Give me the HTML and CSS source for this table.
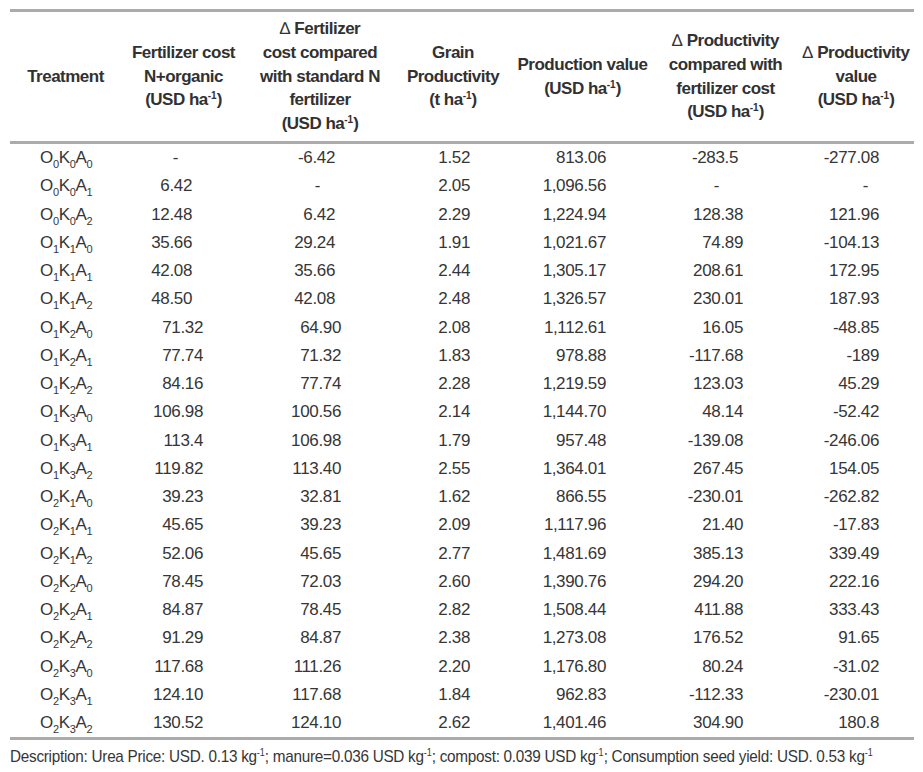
FILE: index.html
```html
<!DOCTYPE html>
<html lang="en">
<head>
<meta charset="utf-8">
<title>Fertilizer cost table</title>
<link rel="stylesheet" href="styles.css">
</head>
<body>
<div class="sheet">
  <div class="tbl">
    <div class="rule"></div>
    <div class="row head">
      <div class="h"><span>Treatment</span></div>
      <div class="h"><span>Fertilizer cost<br>N+organic<br>(USD ha<sup>-1</sup>)</span></div>
      <div class="h"><span><span class="delta">∆</span> Fertilizer<br>cost compared<br>with standard N<br>fertilizer<br>(USD ha<sup>-1</sup>)</span></div>
      <div class="h"><span>Grain<br>Productivity<br>(t ha<sup>-1</sup>)</span></div>
      <div class="h"><span>Production value<br>(USD ha<sup>-1</sup>)</span></div>
      <div class="h"><span><span class="delta">∆</span> Productivity<br>compared with<br>fertilizer cost<br>(USD ha<sup>-1</sup>)</span></div>
      <div class="h"><span><span class="delta">∆</span> Productivity<br>value<br>(USD ha<sup>-1</sup>)</span></div>
    </div>
    <div class="rule"></div>

    <div class="row early first"><div>O<sub>0</sub>K<sub>0</sub>A<sub>0</sub></div><div class="dash">-</div><div>-6.42</div><div>1.52</div><div>813.06</div><div class="short">-283.5</div><div>-277.08</div></div>
    <div class="row early second"><div>O<sub>0</sub>K<sub>0</sub>A<sub>1</sub></div><div>6.42</div><div class="dash">-</div><div>2.05</div><div>1,096.56</div><div class="dash">-</div><div class="dash">-</div></div>
    <div class="row early"><div>O<sub>0</sub>K<sub>0</sub>A<sub>2</sub></div><div>12.48</div><div>6.42</div><div>2.29</div><div>1,224.94</div><div>128.38</div><div>121.96</div></div>
    <div class="row early"><div>O<sub>1</sub>K<sub>1</sub>A<sub>0</sub></div><div>35.66</div><div>29.24</div><div>1.91</div><div>1,021.67</div><div>74.89</div><div>-104.13</div></div>
    <div class="row early"><div>O<sub>1</sub>K<sub>1</sub>A<sub>1</sub></div><div>42.08</div><div>35.66</div><div>2.44</div><div>1,305.17</div><div>208.61</div><div>172.95</div></div>
    <div class="row early"><div>O<sub>1</sub>K<sub>1</sub>A<sub>2</sub></div><div>48.50</div><div>42.08</div><div>2.48</div><div>1,326.57</div><div>230.01</div><div>187.93</div></div>
    <div class="row"><div>O<sub>1</sub>K<sub>2</sub>A<sub>0</sub></div><div>71.32</div><div>64.90</div><div>2.08</div><div>1,112.61</div><div>16.05</div><div>-48.85</div></div>
    <div class="row"><div>O<sub>1</sub>K<sub>2</sub>A<sub>1</sub></div><div>77.74</div><div>71.32</div><div>1.83</div><div>978.88</div><div>-117.68</div><div>-189</div></div>
    <div class="row"><div>O<sub>1</sub>K<sub>2</sub>A<sub>2</sub></div><div>84.16</div><div>77.74</div><div>2.28</div><div>1,219.59</div><div>123.03</div><div>45.29</div></div>
    <div class="row"><div>O<sub>1</sub>K<sub>3</sub>A<sub>0</sub></div><div>106.98</div><div>100.56</div><div>2.14</div><div>1,144.70</div><div>48.14</div><div>-52.42</div></div>
    <div class="row"><div>O<sub>1</sub>K<sub>3</sub>A<sub>1</sub></div><div>113.4</div><div>106.98</div><div>1.79</div><div>957.48</div><div>-139.08</div><div>-246.06</div></div>
    <div class="row"><div>O<sub>1</sub>K<sub>3</sub>A<sub>2</sub></div><div>119.82</div><div>113.40</div><div>2.55</div><div>1,364.01</div><div>267.45</div><div>154.05</div></div>
    <div class="row"><div>O<sub>2</sub>K<sub>1</sub>A<sub>0</sub></div><div>39.23</div><div>32.81</div><div>1.62</div><div>866.55</div><div>-230.01</div><div>-262.82</div></div>
    <div class="row"><div>O<sub>2</sub>K<sub>1</sub>A<sub>1</sub></div><div>45.65</div><div>39.23</div><div>2.09</div><div>1,117.96</div><div>21.40</div><div>-17.83</div></div>
    <div class="row"><div>O<sub>2</sub>K<sub>1</sub>A<sub>2</sub></div><div>52.06</div><div>45.65</div><div>2.77</div><div>1,481.69</div><div>385.13</div><div>339.49</div></div>
    <div class="row"><div>O<sub>2</sub>K<sub>2</sub>A<sub>0</sub></div><div>78.45</div><div>72.03</div><div>2.60</div><div>1,390.76</div><div>294.20</div><div>222.16</div></div>
    <div class="row"><div>O<sub>2</sub>K<sub>2</sub>A<sub>1</sub></div><div>84.87</div><div>78.45</div><div>2.82</div><div>1,508.44</div><div>411.88</div><div>333.43</div></div>
    <div class="row"><div>O<sub>2</sub>K<sub>2</sub>A<sub>2</sub></div><div>91.29</div><div>84.87</div><div>2.38</div><div>1,273.08</div><div>176.52</div><div>91.65</div></div>
    <div class="row"><div>O<sub>2</sub>K<sub>3</sub>A<sub>0</sub></div><div>117.68</div><div>111.26</div><div>2.20</div><div>1,176.80</div><div>80.24</div><div>-31.02</div></div>
    <div class="row"><div>O<sub>2</sub>K<sub>3</sub>A<sub>1</sub></div><div>124.10</div><div>117.68</div><div>1.84</div><div>962.83</div><div>-112.33</div><div>-230.01</div></div>
    <div class="row"><div>O<sub>2</sub>K<sub>3</sub>A<sub>2</sub></div><div>130.52</div><div>124.10</div><div>2.62</div><div>1,401.46</div><div>304.90</div><div>180.8</div></div>
    <div class="rule"></div>
  </div>
  <p class="note">Description: Urea Price: USD. 0.13 kg<sup>-1</sup>; manure=0.036 USD kg<sup>-1</sup>; compost: 0.039 USD kg<sup>-1</sup>; Consumption seed yield: USD. 0.53 kg<sup>-1</sup></p>
</div>
</body>
</html>
```

FILE: styles.css
```css
html, body {
  margin: 0;
  padding: 0;
  background: #ffffff;
}

.sheet {
  padding: 9px 0 0 10px;
  font-family: "Liberation Sans", Arial, sans-serif;
  color: #363636;
}

.tbl {
  display: grid;
  width: 904px;
  grid-template-columns: 111px 125px 148px 118px 141px 145px 116px;
  grid-template-rows: 3px 129px 3px repeat(21, 28.25px) 3px;
}

.rule {
  grid-column: 1 / -1;
  background: #ababab;
}

.row {
  display: contents;
}

.row > div {
  display: block;
  text-align: right;
  font-size: 17px;
  letter-spacing: -0.35px;
  line-height: 28.25px;
  white-space: nowrap;
}

/* header */
.head > .h {
  display: flex;
  align-items: center;
  justify-content: center;
}

.head > .h > span {
  display: block;
  text-align: center;
  font-weight: bold;
  font-size: 17px;
  letter-spacing: -0.5px;
  line-height: 23.7px;
  color: #313131;
}

.delta {
  font-weight: normal;
  letter-spacing: 0;
}

sup {
  font-size: 10px;
  line-height: 0;
  vertical-align: 6px;
  letter-spacing: 0;
}

sub {
  font-size: 11px;
  line-height: 0;
  vertical-align: -5px;
  letter-spacing: -0.3px;
}

/* columns */
.row > div:nth-child(1) {
  text-align: left;
  padding-left: 30px;
}
.row > div:nth-child(2) { padding-right: 43px; }
.row > div:nth-child(3) { padding-right: 53px; }
.row > div:nth-child(4) { padding-right: 42px; }
.row > div:nth-child(5) { padding-right: 47px; }
.row > div:nth-child(6) { padding-right: 55px; }
.row > div:nth-child(7) { padding-right: 35px; }

.head > .h:nth-child(n) { padding: 0; }

.early > div:nth-child(2) { padding-right: 54px; }
.early > div:nth-child(3) { padding-right: 59px; }

.first > div:nth-child(2).dash { padding-right: 68px; }
.first > div:nth-child(6).short { padding-right: 60px; }
.second > div:nth-child(3).dash { padding-right: 74px; }
.second > div:nth-child(6).dash { padding-right: 79px; }
.second > div:nth-child(7).dash { padding-right: 46px; }

.note {
  margin: 7px 0 0 0;
  font-size: 17px;
  line-height: 20px;
  letter-spacing: -0.3px;
  white-space: nowrap;
  transform: scaleX(0.9);
  transform-origin: left center;
}

.note sup {
  font-size: 10px;
}
```
